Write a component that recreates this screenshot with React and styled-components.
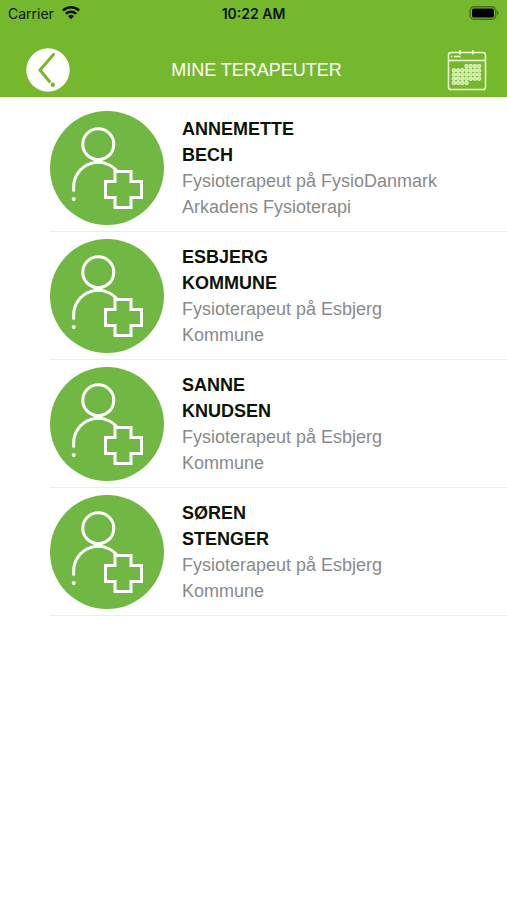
import React from 'react';
import styled, { createGlobalStyle } from 'styled-components';

const therapists = [
	{ id: 1, first: 'Annemette', last: 'Bech', role: 'Fysioterapeut på FysioDanmark Arkadens Fysioterapi' },
	{ id: 2, first: 'Esbjerg', last: 'Kommune', role: 'Fysioterapeut på Esbjerg Kommune' },
	{ id: 3, first: 'Sanne', last: 'Knudsen', role: 'Fysioterapeut på Esbjerg Kommune' },
	{ id: 4, first: 'Søren', last: 'Stenger', role: 'Fysioterapeut på Esbjerg Kommune' },
];

// day cells in the calendar icon, [first column, last column] for each week
const weeks = [[3, 6], [0, 6], [0, 6], [0, 6], [0, 3]];

const WifiIcon = () => (
	<svg width="18" height="14" viewBox="0 0 18 14" fill="none" stroke="#0b1404" strokeWidth="2.5" aria-hidden="true">
		<path d="M0.9 4.7a11.5 11.5 0 0 1 16.2 0" />
		<path d="M3.8 7.9a7.4 7.4 0 0 1 10.4 0" />
		<path d="M9 13.2l-2.9-2.9a4.1 4.1 0 0 1 5.8 0z" fill="#0b1404" stroke="none" />
	</svg>
);

const BatteryIcon = () => (
	<svg width="30" height="14" viewBox="0 0 30 14" aria-hidden="true">
		<rect x="1.2" y="0.8" width="25.6" height="12.4" rx="3.8" fill="none" stroke="#44701b" strokeWidth="1.4" />
		<rect x="3" y="2.6" width="22" height="8.8" rx="1.6" fill="#000" />
		<path d="M28 4.8c2 .8 2 3.6 0 4.4z" fill="#44701b" />
	</svg>
);

const BackIcon = () => (
	<svg width="44" height="44" viewBox="0 0 44 44" aria-hidden="true">
		<circle cx="22" cy="22" r="21.7" fill="#fff" />
		<path d="M27.5 6.5L14 22l9.5 11.5" fill="none" stroke="#76b82d" strokeWidth="3" strokeLinecap="round" />
		<circle cx="26.8" cy="36.8" r="2.2" fill="#76b82d" />
	</svg>
);

const CalendarIcon = () => (
	<svg width="40" height="42" viewBox="0 0 40 42" fill="none" stroke="#f1fbd9" strokeWidth="1.5" aria-hidden="true">
		<rect x="1.5" y="3.6" width="37" height="37" rx="2.6" />
		<path d="M1.5 11.4h37M13.1 1v4.6M25.8 1v4.6" />
		<path d="M4 7.6h1.4M7 7.6h6.6" />
		{weeks.map(([from, to], row) => (
			Array.from({ length: to - from + 1 }, (_, i) => (
				<rect
					key={`${row}-${i}`}
					x={5.3 + (from + i) * 4.2}
					y={15.5 + row * 4.2}
					width="3.2"
					height="3.2"
					rx="0.9"
					fill="#c4e394"
					strokeWidth="0.9"
				/>
			))
		))}
	</svg>
);

const TherapistIcon = () => (
	<svg width="114" height="114" viewBox="0 0 114 114" fill="none" stroke="#fff" strokeWidth="3" aria-hidden="true">
		<circle cx="57" cy="57" r="57" fill="#70b744" stroke="none" />
		<circle cx="48.3" cy="33.2" r="15.5" />
		<path d="M23.7 80.5V76a24.6 24.6 0 0 1 44-15.2" />
		<circle cx="23.7" cy="88" r="2" fill="#fff" stroke="none" />
		<path d="M65 60.500h16v10h10.500v16h-10.500v10h-16v-10h-9.500v-16h9.500z" />
	</svg>
);

const App = () => (
	<Screen>
		<GlobalStyle />
		<Header>
			<StatusBar>
				<Carrier>Carrier <WifiIcon /></Carrier>
				<Time>10:22 AM</Time>
				<Battery><BatteryIcon /></Battery>
			</StatusBar>
			<NavBar>
				<IconButton type="button" aria-label="Tilbage"><BackIcon /></IconButton>
				<Title>Mine terapeuter</Title>
				<IconButton type="button" aria-label="Kalender" $end><CalendarIcon /></IconButton>
			</NavBar>
		</Header>
		<List>
			{therapists.map(person => (
				<Row key={person.id}>
					<TherapistIcon />
					<Info>
						<Name>
							<span>{person.first}</span>
							<span>{person.last}</span>
						</Name>
						<Role>{person.role}</Role>
					</Info>
				</Row>
			))}
		</List>
	</Screen>
);

const GlobalStyle = createGlobalStyle`
	* {
		box-sizing: border-box;
	}
	body {
		margin: 0;
		background: #fff;
		font-family: 'Liberation Sans', Arial, sans-serif;
	}
`;

const Screen = styled.div`
	min-height: 100vh;
	background: #fff;
`;

const Header = styled.header`
	background: #76b82d;
`;

const StatusBar = styled.div`
	display: grid;
	grid-template-columns: 1fr auto 1fr;
	align-items: center;
	height: 26px;
	padding: 0 8px;
	color: #0b1404;
	font-family: Inter, Roboto, sans-serif;
	font-size: 14px;
`;

const Carrier = styled.span`
	display: flex;
	align-items: center;
	gap: 8px;
`;

const Time = styled.span`
	font-weight: 600;
`;

const Battery = styled.span`
	display: flex;
	justify-content: flex-end;
`;

const NavBar = styled.div`
	display: grid;
	grid-template-columns: 1fr auto 1fr;
	align-items: center;
	padding: 22px 20px 5px 26px;
`;

const IconButton = styled.button`
	display: flex;
	justify-self: ${props => (props.$end ? 'end' : 'start')};
	padding: 0;
	border: 0;
	background: none;
	cursor: pointer;
`;

const Title = styled.h1`
	margin: 0;
	color: #fff;
	font-size: 18px;
	font-weight: normal;
	text-transform: uppercase;
`;

const List = styled.ul`
	margin: 0;
	padding: 7px 0 0 50px;
	list-style: none;
`;

const Row = styled.li`
	display: flex;
	align-items: center;
	gap: 18px;
	padding: 7px 50px 6px 0;
	border-bottom: 1px solid #ececec;

	svg {
		flex-shrink: 0;
	}
`;

const Info = styled.div`
	font-size: 18px;
	line-height: 26px;
`;

const Name = styled.h2`
	margin: 0;
	color: #0c1205;
	font-size: 18px;
	font-weight: bold;
	text-transform: uppercase;

	span {
		display: block;
	}
`;

const Role = styled.p`
	margin: 0;
	color: #8a8a8a;
`;

export default App;
